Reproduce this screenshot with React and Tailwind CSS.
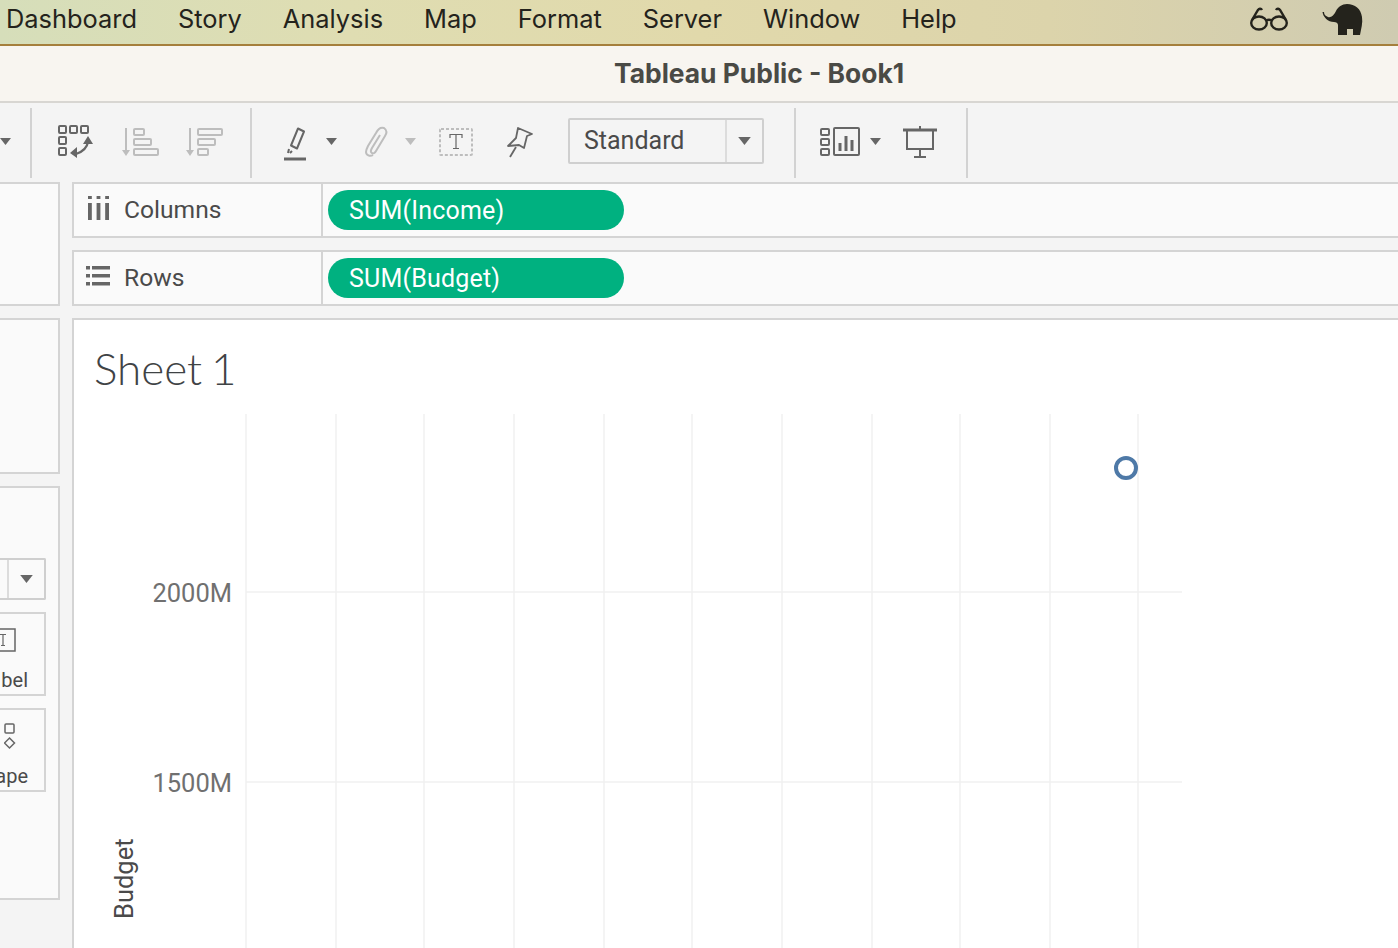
import React from 'react'

const xs = [246, 336, 424, 514, 604, 692, 782, 872, 960, 1050, 1138]

const Caret = ({ className = 'fill-[#666]', w = 11, h = 7 }) => (
    <svg width={w} height={h} viewBox="0 0 11 7" className={`shrink-0 ${className}`}>
        <path d="M0 0h11L5.5 7z" />
    </svg>
)

const Sep = () => <div className="w-0.5 h-[70px] mt-[3px] bg-[#d2d2d2] shrink-0"></div>

const SwapIcon = () => (
    <svg width="38" height="36" viewBox="0 0 38 36" fill="none" stroke="#666" strokeWidth="2" className="shrink-0">
        <rect x="1" y="2" width="7" height="7" rx="1" />
        <rect x="12" y="2" width="7" height="7" rx="1" />
        <rect x="23" y="2" width="7" height="7" rx="1" />
        <rect x="1" y="13" width="7" height="7" rx="1" />
        <rect x="1" y="24" width="7" height="7" rx="1" />
        <path d="M30 18c-1 6-6 10-12 12" strokeWidth="2.2" />
        <path d="M30 12l5 8H25zM12 29l7-6v11z" fill="#666" stroke="none" />
    </svg>
)

const SortAsc = () => (
    <svg width="37" height="30" viewBox="0 0 37 30" fill="none" stroke="#bdbdbd" strokeWidth="2" className="shrink-0">
        <path d="M4 1v23" />
        <path d="M0 23h8l-4 6z" fill="#bdbdbd" stroke="none" />
        <rect x="12" y="2" width="10" height="6" rx="1" />
        <rect x="12" y="12" width="17" height="6" rx="1" />
        <rect x="12" y="22" width="24" height="6" rx="1" />
    </svg>
)

const SortDesc = () => (
    <svg width="37" height="30" viewBox="0 0 37 30" fill="none" stroke="#bdbdbd" strokeWidth="2" className="shrink-0">
        <path d="M4 1v23" />
        <path d="M0 23h8l-4 6z" fill="#bdbdbd" stroke="none" />
        <rect x="12" y="2" width="24" height="6" rx="1" />
        <rect x="12" y="12" width="17" height="6" rx="1" />
        <rect x="12" y="22" width="10" height="6" rx="1" />
    </svg>
)

const Highlighter = () => (
    <svg width="24" height="34" viewBox="0 0 24 34" fill="none" stroke="#666" strokeWidth="2" className="shrink-0 mt-1">
        <path d="M14 1.500l6 3-7 17-6-3z" strokeLinejoin="round" />
        <path d="M5 22l-1 4M8 24l-2 2" />
        <path d="M0 32h22" strokeWidth="3" />
    </svg>
)

const Clip = () => (
    <svg width="28" height="32" viewBox="0 0 28 32" fill="none" stroke="#bdbdbd" strokeWidth="2" className="shrink-0">
        <path d="M12 29c-3 2-7 0-7-3 0-2 1-4 2-6l8-13c2-4 5-6 8-5 3 2 3 5 1 8l-9 15c-1 2-3 3-4 2-2-1-1-3 0-5l8-13" />
    </svg>
)

const TextBox = () => (
    <svg width="34" height="28" viewBox="0 0 34 28" fill="none" className="shrink-0">
        <rect x="1" y="1" width="32" height="26" rx="1" stroke="#bdbdbd" strokeWidth="2" strokeDasharray="3 2" />
        <path d="M11 10V6.500h12V10M17 6.500v14M14 20.500h6" stroke="#666" strokeWidth="1.200" />
    </svg>
)

const Pin = () => (
    <svg width="28" height="32" viewBox="0 0 28 32" fill="none" stroke="#666" strokeWidth="1.800" strokeLinejoin="round" className="shrink-0">
        <path d="M12 2l14 6-5 2-3 12-5-3-11 1 8-8z" />
        <path d="M10 21l-6 10" />
    </svg>
)

const ShowMe = () => (
    <svg width="40" height="30" viewBox="0 0 40 30" fill="none" stroke="#666" strokeWidth="2" className="shrink-0">
        <rect x="1" y="2" width="8" height="6" rx="1" />
        <rect x="1" y="12" width="8" height="6" rx="1" />
        <rect x="1" y="22" width="8" height="6" rx="1" />
        <rect x="14" y="1" width="25" height="27" rx="1" />
        <path d="M20 24v-8M26 24V9M32 24V13" strokeWidth="3" />
    </svg>
)

const Present = () => (
    <svg width="34" height="32" viewBox="0 0 34 32" fill="none" stroke="#666" strokeWidth="2" className="shrink-0">
        <path d="M0 4h34" strokeWidth="3" />
        <path d="M17 0v4M4 5v18h26V5M17 23v7M11 31h12" />
    </svg>
)

const Glasses = () => (
    <svg width="38" height="24" viewBox="0 0 38 24" fill="none" stroke="#24231c" strokeWidth="2.400" className="shrink-0">
        <ellipse cx="9" cy="16" rx="7.800" ry="6.500" />
        <ellipse cx="29" cy="16" rx="7.800" ry="6.500" />
        <path d="M16 13.500c2-1 4-1 6 0M2 13l6-10c1-1.500 3-2 4 0M36 13L30 3c-1-1.500-3-2-4 0" />
    </svg>
)

const Elephant = () => (
    <svg width="42" height="33" viewBox="0 0 42 33" className="shrink-0 fill-[#24231c]">
        <path d="M0.500 9C1 14 6 19 12 19C14 19 16 20 16 22V32H25V26H31V32H38C39 26 41 20 40 14C39 6 33 1 25 1C20 1 16 4 14 8C12 12 9 15 6 14C3 13 2 11 2 9z" />
    </svg>
)

const ColumnsIcon = () => (
    <svg width="21" height="24" viewBox="0 0 22 24" preserveAspectRatio="none" className="shrink-0 ml-[1.500px] fill-[#666]">
        <path d="M0 0h4v3H0zM9 0h4v3H9zM18 0h4v3h-4zM0 7h4v17H0zM9 7h4v17H9zM18 7h4v17h-4z" />
    </svg>
)

const RowsIcon = () => (
    <svg width="24" height="20" viewBox="0 0 24 20" className="shrink-0 fill-[#666]">
        <path d="M0 0h4v3.500H0zM6 0h18v3.500H6zM0 8h4v3.500H0zM6 8h18v3.500H6zM0 16h4v3.500H0zM6 16h18v3.500H6z" />
    </svg>
)

const Shelf = ({ icon, label, pill }) => (
    <div className="h-14 flex border-2 border-r-0 border-[#d4d4d4] bg-[#fafafa]">
        <div className="w-[249px] shrink-0 flex items-center border-r-2 border-[#d4d4d4]">
            <div className="w-[50px] pl-3 -mt-1 shrink-0">{icon}</div>
            <span className="text-[24.600px] leading-none text-[#4a4a4a]">{label}</span>
        </div>
        <div className="flex items-center pl-[5px]">
            <div className="w-[296px] h-10 rounded-full bg-[#00b180] pl-[21px] flex items-center text-[25px] leading-none tracking-[0.2px] text-white">{pill}</div>
        </div>
    </div>
)

const MarkCard = ({ icon, label }) => (
    <div className="w-[46px] h-[84px] border-2 border-l-0 border-[#d4d4d4] flex flex-col items-end overflow-hidden">
        <div className="h-14 pb-1 flex items-center pr-1.5">{icon}</div>
        <span className="text-[20px] leading-[20px] text-[#4a4a4a] pr-4">{label}</span>
    </div>
)

const App = () => {
    return (
        <div className="w-[1398px] h-[948px] overflow-hidden flex flex-col bg-[#f4f4f4] font-['Roboto',sans-serif]">
            {/* Mac menu bar */}
            <div className="h-[46px] shrink-0 flex items-center pl-1.5 pr-[34px] pb-1.5 border-b-2 border-[#a57f3c] bg-[linear-gradient(90deg,#d6deba_0%,#dfddb2_25%,#e1d9ab_50%,#dcd4ab_75%,#cfcbb1_100%)]">
                <div className="flex gap-[41px] text-[25.400px] leading-none font-['Inter',sans-serif] text-[#24231c]">
                    <span>Dashboard</span>
                    <span>Story</span>
                    <span>Analysis</span>
                    <span>Map</span>
                    <span>Format</span>
                    <span>Server</span>
                    <span>Window</span>
                    <span>Help</span>
                </div>
                <div className="ml-auto flex items-center gap-[34px]">
                    <Glasses />
                    <Elephant />
                </div>
            </div>

            {/* Title bar */}
            <div className="h-[57px] shrink-0 flex items-center pl-[614px] pb-px border-b-2 border-[#d8d6d2] bg-[#f8f5f0]">
                <span className="text-[26.400px] leading-none font-bold font-['Inter',sans-serif] text-[#4a4a45]">Tableau Public - Book1</span>
            </div>

            {/* Toolbar */}
            <div className="h-[79px] shrink-0 flex items-center pb-0.5">
                <div className="w-[30px] shrink-0 flex items-center">
                    <Caret />
                </div>
                <Sep />
                <div className="w-[218px] shrink-0 flex items-center pl-[26px]">
                    <SwapIcon />
                    <div className="ml-[26px]"><SortAsc /></div>
                    <div className="ml-[27px]"><SortDesc /></div>
                </div>
                <Sep />
                <div className="w-[542px] shrink-0 flex items-center pl-[32px]">
                    <Highlighter />
                    <div className="ml-[18px]"><Caret /></div>
                    <div className="ml-6"><Clip /></div>
                    <div className="ml-[16px]"><Caret className="fill-[#bdbdbd]" /></div>
                    <div className="ml-[23px]"><TextBox /></div>
                    <div className="ml-[33px]"><Pin /></div>
                    <div className="ml-[34px] -mt-0.5 w-[196px] h-[46px] flex border-2 border-[#cfcfcf] rounded-[2px] items-center">
                        <span className="w-[157px] h-full flex items-center pl-3.5 border-r-2 border-[#dcdcdc] text-[25px] leading-none text-[#4a4a4a]">Standard</span>
                        <div className="flex-1 flex justify-center"><Caret w={13} h={8} /></div>
                    </div>
                </div>
                <Sep />
                <div className="w-[170px] shrink-0 flex items-center pl-6">
                    <ShowMe />
                    <div className="ml-2.5"><Caret /></div>
                    <div className="ml-[22px]"><Present /></div>
                </div>
                <Sep />
            </div>

            {/* Workspace */}
            <div className="flex-1 min-h-0 flex gap-3">
                <div className="w-[60px] shrink-0 flex flex-col gap-3">
                    <div className="h-[124px] shrink-0 border-2 border-l-0 border-[#d4d4d4] bg-[#fafafa]"></div>
                    <div className="h-[156px] shrink-0 border-2 border-l-0 border-[#d4d4d4] bg-[#fafafa]"></div>
                    <div className="h-[414px] shrink-0 border-2 border-l-0 border-[#d4d4d4] bg-[#fafafa] pt-[70px] flex flex-col gap-3">
                        <div className="w-[46px] h-[42px] flex border-2 border-l-0 border-[#cfcfcf] rounded-r-[2px] items-center">
                            <div className="w-[9px] h-full border-r-2 border-[#dcdcdc] shrink-0"></div>
                            <div className="flex-1 flex justify-center"><Caret w={13} h={8} /></div>
                        </div>
                        <MarkCard
                            label="bel"
                            icon={
                                <svg width="16" height="24" viewBox="0 0 16 24" fill="none" className="mr-[22px]">
                                    <path d="M0 1h15v22H0" stroke="#666" strokeWidth="1.500" />
                                    <path d="M0 6.500h6M3 6.500v11M1 17.500h4" stroke="#666" strokeWidth="1.200" />
                                </svg>
                            }
                        />
                        <MarkCard
                            label="ape"
                            icon={
                                <svg width="12" height="27" viewBox="0 0 12 27" fill="none" stroke="#666" strokeWidth="1.500" className="mr-[22px]">
                                    <rect x="1" y="1" width="9" height="9" rx="1" />
                                    <path d="M5.500 15l5 5-5 5-5-5z" />
                                </svg>
                            }
                        />
                    </div>
                </div>

                <div className="flex-1 min-w-0 flex flex-col gap-3">
                    <Shelf icon={<ColumnsIcon />} label="Columns" pill="SUM(Income)" />
                    <Shelf icon={<RowsIcon />} label="Rows" pill="SUM(Budget)" />
                    <div className="flex-1 min-h-0 border-2 border-r-0 border-b-0 border-[#d4d4d4] bg-white flex flex-col">
                        <h1 className="text-[44px] leading-none font-['Lato',sans-serif] font-light [word-spacing:-3px] text-[#3f4345] pl-5 pt-[26px]">Sheet 1</h1>
                        {/* chart: coordinates in viewport px */}
                        <svg width="1324" height="628" viewBox="74 320 1324 628" className="absolute left-[74px] top-[320px] pointer-events-none">
                            {xs.map((x) => (
                                <line key={x} x1={x} x2={x} y1="414" y2="948" stroke="#f0f0f0" strokeWidth="1.500" />
                            ))}
                            <line x1="246" x2="1182" y1="592" y2="592" stroke="#f0f0f0" strokeWidth="1.500" />
                            <line x1="246" x2="1182" y1="782" y2="782" stroke="#f0f0f0" strokeWidth="1.500" />
                            <text x="232" y="602" textAnchor="end" fontSize="25.500" fill="#707070" fontFamily="Roboto, sans-serif">2000M</text>
                            <text x="232" y="792" textAnchor="end" fontSize="25.500" fill="#707070" fontFamily="Roboto, sans-serif">1500M</text>
                            <text transform="translate(133 919) rotate(-90)" fontSize="25.500" fill="#4a4a4a" fontFamily="Roboto, sans-serif">Budget</text>
                            <circle cx="1126" cy="468" r="10" fill="none" stroke="#4e79a7" strokeWidth="4" />
                        </svg>
                    </div>
                </div>
            </div>
        </div>
    )
}

export default App
